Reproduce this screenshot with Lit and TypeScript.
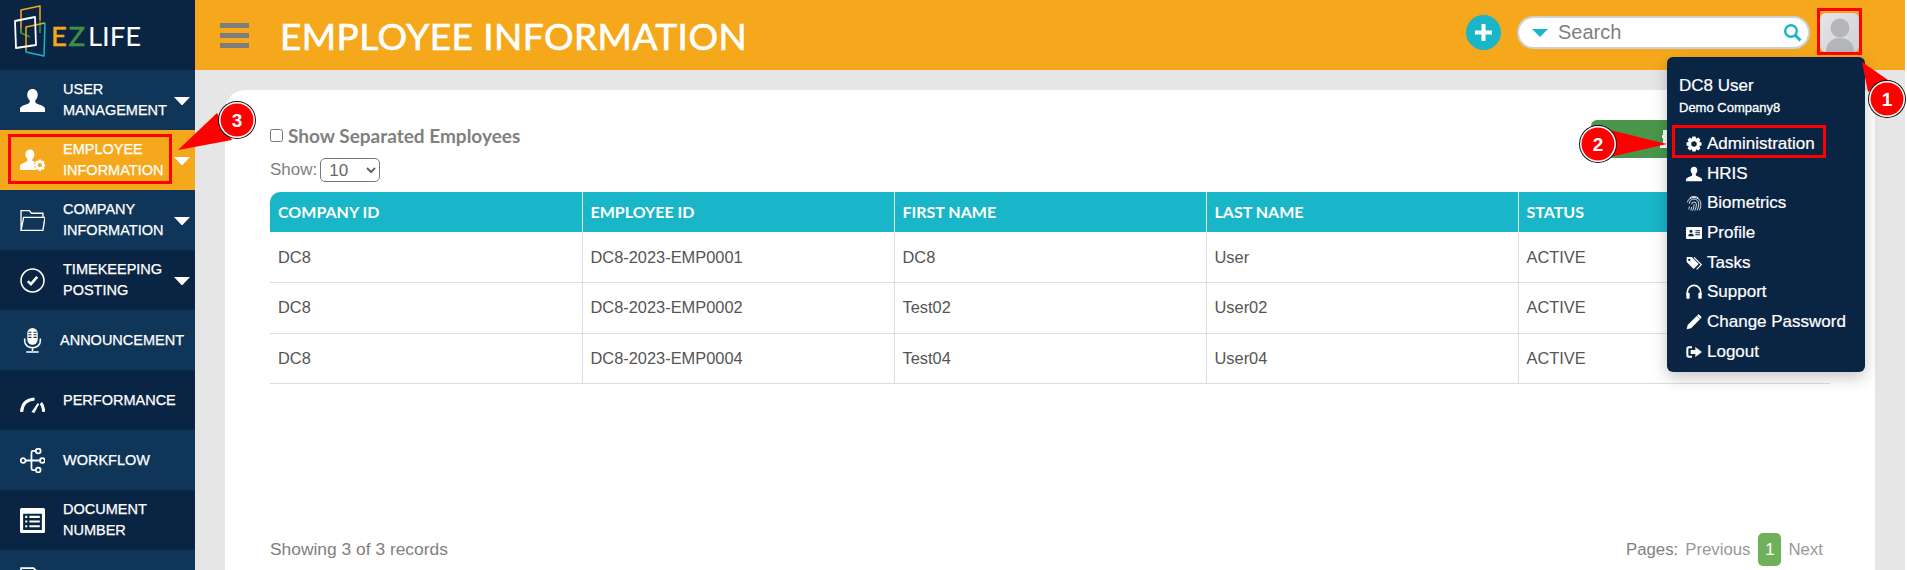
import { LitElement, html, css, svg } from "lit";
import { customElement } from "lit/decorators.js";

const gearPath = (cx: number, cy: number, ro: number, ri: number, hole: number, teeth = 8) => {
  const pts: string[] = [];
  const step = (Math.PI * 2) / teeth;
  for (let i = 0; i < teeth; i++) {
    const a = i * step - Math.PI / 2;
    const spread = [[-0.5, ri], [-0.26, ro], [0.26, ro], [0.5, ri]] as const;
    for (const [k, r] of spread) {
      const t = a + k * step;
      pts.push(`${(cx + r * Math.cos(t)).toFixed(2)} ${(cy + r * Math.sin(t)).toFixed(2)}`);
    }
  }
  const ring = `M${cx - hole} ${cy}a${hole} ${hole} 0 1 0 ${hole * 2} 0a${hole} ${hole} 0 1 0 ${-hole * 2} 0z`;
  return `M${pts.join("L")}z${ring}`;
};

const gear = (cx: number, cy: number, ro: number) =>
  svg`<path fill="currentColor" fill-rule="evenodd" d=${gearPath(cx, cy, ro, ro * 0.74, ro * 0.36)}></path>`;

const USER = "M12 1c-3.2 0-5 2.4-5 5.5 0 2.2 1 4.2 2.3 5.3v1.7c0 .8-1 1.4-3 2.2C3.6 16.7 0 18 0 20v3h24v-3c0-2-3.6-3.3-6.3-4.3-2-.8-3-1.4-3-2.2v-1.700C16 10.700 17 8.700 17 6.500 17 3.400 15.200 1 12 1z";

const sideIcons: Record<string, unknown> = {
  user: svg`<path fill="currentColor" d=${USER}></path>`,
  emp: svg`<path fill="currentColor" d="M9.500 1.500c-2.700 0-4.300 2-4.300 4.600 0 1.900.8 3.500 1.900 4.500v1.400c0 .7-.8 1.200-2.500 1.800C2.400 14.600 0 15.600 0 17.500V21h15.500c-1.200-1.200-2-2.800-2-4.500 0-1.100.3-2.100.8-3-.9-.4-1.800-.8-2.400-1.200v-1.700c1.100-1 1.900-2.600 1.900-4.500 0-2.600-1.600-4.600-3.800-4.600z"></path>${gear(19, 16.500, 5.500)}`,
  folder: svg`<path fill="none" stroke="currentColor" stroke-width="1.300" d="M1 21.500V2.500h8l2 2.500h11v4M1 21.500L3.500 9H24l-2 12.500z"></path>`,
  check: svg`<circle cx="12" cy="12" r="11" fill="none" stroke="currentColor" stroke-width="1.500"></circle><path fill="none" stroke="currentColor" stroke-width="2.400" d="M7.500 12.500l3 3 6-7"></path>`,
  mic: svg`<rect x="7" y="0" width="10" height="16" rx="5" fill="currentColor"></rect><path stroke="#0f3558" stroke-width="1" d="M8 4h3M13 4h3M8 6.500h3M13 6.500h3M8 9h3M13 9h3"></path><path fill="none" stroke="currentColor" stroke-width="1.500" d="M4.500 10v2.500c0 4 3.300 6.500 7.500 6.500s7.500-2.500 7.500-6.500V10M12 19v3M6 23h12"></path>`,
  gauge: svg`<path fill="none" stroke="currentColor" stroke-width="3" d="M1.500 23C2 15 7 11 14 10.500M20 14.500c1.800 2 2.500 5 2.800 8.500"></path><path fill="currentColor" d="M11 23l6-8.500 1.300 1-4.500 8.500z"></path>`,
  flow: svg`<g fill="none" stroke="currentColor" stroke-width="1.700"><circle cx="3" cy="12" r="2.300"></circle><circle cx="17.500" cy="2.800" r="2.300"></circle><circle cx="21.500" cy="12" r="2.300"></circle><circle cx="17.500" cy="21.200" r="2.300"></circle><path d="M5.300 12h13.900M15.200 2.800h-2.700c-1 0-1.500.6-1.500 1.500v15.400c0 .9.500 1.500 1.500 1.500h2.700"></path></g>`,
  doc: svg`<path fill="currentColor" fill-rule="evenodd" d="M1.500 0h21A1.500 1.500 0 0 1 24 1.500v21a1.500 1.500 0 0 1-1.500 1.500h-21A1.500 1.500 0 0 1 0 22.500v-21A1.500 1.500 0 0 1 1.500 0zM3 5.500V21h18V5.500zM5 7.500h2v2H5zM9 7.500h10v2H9zM5 12h2v2H5zM9 12h10v2H9zM5 16.500h2v2H5zM9 16.500h10v2H9z"></path>`,
  file: svg`<path fill="none" stroke="currentColor" stroke-width="1.600" d="M1 1h12l4 4v18H1z"></path>`,
};

const menuIcons: Record<string, unknown> = {
  gear: svg`${gear(12, 12, 11.500)}`,
  user: svg`<path fill="currentColor" d=${USER}></path>`,
  finger: svg`<g fill="none" stroke="currentColor" stroke-width="1.300"><path d="M5 5a10 10 0 0 1 14 0M2 11a10.500 10.500 0 0 1 20 0c.5 5 0 8-2 12M5 13a7 7 0 0 1 14 0c0 4-.8 7-2.500 10M8.500 14a3.500 3.500 0 0 1 7 0c0 4-1 7-2.500 9.500M12 14c0 4-.7 7-2.500 9.500M5 17c0 2-.2 3-.8 4.500M8.500 18c0 2-.5 3.500-1.500 5"></path></g>`,
  card: svg`<path fill="currentColor" fill-rule="evenodd" d="M1.500 3h21A1.500 1.500 0 0 1 24 4.500v15a1.500 1.500 0 0 1-1.500 1.500h-21A1.500 1.500 0 0 1 0 19.500v-15A1.500 1.500 0 0 1 1.500 3zM7.500 7a2.300 2.300 0 1 0 0 4.600 2.300 2.300 0 0 0 0-4.600zM3.500 17h8v-1.500c0-1.500-1.500-2.500-4-2.500s-4 1-4 2.500zM14 8v1.500h7V8zM14 11v1.500h7V11zM14 14v1.500h7V14z"></path>`,
  tags: svg`<path fill="currentColor" fill-rule="evenodd" d="M1 3h7.500L19 13.500 11.500 21 1 10.500zM5 5.500a1.800 1.800 0 1 0 0 3.600 1.800 1.800 0 0 0 0-3.600z"></path><path fill="none" stroke="currentColor" stroke-width="1.800" d="M12 3.500L23 14.500l-7 7"></path>`,
  head: svg`<path fill="none" stroke="currentColor" stroke-width="2.500" d="M2 16v-4a10 10 0 0 1 20 0v4"></path><rect x="0.500" y="13" width="5" height="9" rx="1.500" fill="currentColor"></rect><rect x="18.500" y="13" width="5" height="9" rx="1.500" fill="currentColor"></rect>`,
  pencil: svg`<path fill="currentColor" d="M1 23l1.500-6.500L16 3l5 5L7.500 21.500zM17.500 1.500c.8-.8 2-.8 2.800 0l2.200 2.200c.8.800.8 2 0 2.800l-1 1-5-5z"></path>`,
  out: svg`<path fill="none" stroke="currentColor" stroke-width="3" d="M9 5H4.500C3 5 2 6 2 7.500v9C2 18 3 19 4.500 19H9"></path><path fill="currentColor" d="M14 4.500l10 7.500-10 7.500V15H7V9h7z"></path>`,
};

const NAV = [
  { icon: "user", lines: ["USER", "MANAGEMENT"], caret: true, tone: "light" },
  { icon: "emp", lines: ["EMPLOYEE", "INFORMATION"], caret: true, tone: "active" },
  { icon: "folder", lines: ["COMPANY", "INFORMATION"], caret: true, tone: "light" },
  { icon: "check", lines: ["TIMEKEEPING", "POSTING"], caret: true, tone: "dark" },
  { icon: "mic", lines: ["ANNOUNCEMENT"], caret: false, tone: "light wide" },
  { icon: "gauge", lines: ["PERFORMANCE"], caret: false, tone: "dark" },
  { icon: "flow", lines: ["WORKFLOW"], caret: false, tone: "light" },
  { icon: "doc", lines: ["DOCUMENT", "NUMBER"], caret: false, tone: "dark" },
  { icon: "file", lines: [], caret: false, tone: "light last" },
];

const MENU = [
  { icon: "gear", label: "Administration" },
  { icon: "user", label: "HRIS" },
  { icon: "finger", label: "Biometrics" },
  { icon: "card", label: "Profile" },
  { icon: "tags", label: "Tasks" },
  { icon: "head", label: "Support" },
  { icon: "pencil", label: "Change Password" },
  { icon: "out", label: "Logout" },
];

const COLS = ["COMPANY ID", "EMPLOYEE ID", "FIRST NAME", "LAST NAME", "STATUS"];
const ROWS = [
  ["DC8", "DC8-2023-EMP0001", "DC8", "User", "ACTIVE"],
  ["DC8", "DC8-2023-EMP0002", "Test02", "User02", "ACTIVE"],
  ["DC8", "DC8-2023-EMP0004", "Test04", "User04", "ACTIVE"],
];

@customElement("app-root")
export class AppRoot extends LitElement {
  static styles = css`
    :host { display: block; width: 1907px; height: 570px; overflow: hidden; position: relative; background: #fff; font-family: "Liberation Sans", Arial, sans-serif; }
    .shell { display: grid; grid-template-columns: 195px 1710px; height: 570px; overflow: hidden; }
    .side { background: #0a2543; color: #fff; overflow: hidden; }
    .logo { height: 70px; display: flex; align-items: center; padding-left: 14px; gap: 4px; box-sizing: border-box; }
    .logo svg { margin-bottom: 6px; overflow: visible; }
    .logo-text { font-family: Lato, sans-serif; font-size: 27.500px; font-weight: 400; letter-spacing: 0; line-height: 1; margin-top: 1px; }
    .logo-text .e { color: #f5a81c; letter-spacing: 1.500px; -webkit-text-stroke: 0.5px currentColor; }
    .logo-text .z { color: #3f9142; letter-spacing: 3px; -webkit-text-stroke: 0.5px currentColor; }
    .row { height: 60px; display: flex; align-items: center; padding-left: 20px; box-sizing: border-box; position: relative; }
    .row.light { background: #0f3558; }
    .row.dark { background: #0a2543; }
    .row.active { background: #f5a81c; }
    .ico { width: 25px; height: 25px; flex: none; display: block; }
    .label { margin-left: 18px; font-size: 14.500px; line-height: 21px; -webkit-text-stroke: 0.25px currentColor; }
    .row.wide .label { margin-left: 15px; }
    .row.last { align-items: flex-start; padding-top: 17px; }
    .caret { position: absolute; left: 174px; top: 27px; width: 16px; height: 8px; }
    .main { background: #e6e6e6; display: flex; flex-direction: column; height: 570px; }
    .top { height: 70px; background: #f5a81c; display: flex; align-items: center; flex: none; padding-right: 46px; box-sizing: border-box; }
    .burger { width: 29px; margin-left: 25px; display: flex; flex-direction: column; gap: 5px; }
    .burger i { display: block; height: 5px; background: #7d7d7d; }
    .title { font-family: Lato, sans-serif; font-weight: 400; font-size: 37px; color: #fff; margin-left: 31px; letter-spacing: 0.45px; line-height: 1; flex: 1; -webkit-text-stroke: 0.7px #fff; }
    .plus { width: 35px; height: 35px; margin-bottom: 5px; border-radius: 50%; background: #19b5c9; display: flex; align-items: center; justify-content: center; }
    .search { width: 293px; height: 33px; margin-bottom: 5px; box-sizing: border-box; margin-left: 16px; border: 2px solid #d0d0d0; border-radius: 17px; background: #fff; display: flex; align-items: center; padding: 0 6px 0 13px; }
    .search .tri { width: 16px; height: 8px; flex: none; }
    .search .ph { font-size: 20px; color: #7f7f7f; margin-left: 10px; flex: 1; }
    .search .mag { width: 19px; height: 19px; flex: none; }
    .avatar { width: 39px; height: 39px; margin-bottom: 5px; margin-left: 10px; display: block; }
    .card { flex: 1; margin: 20px 30px 0; background: #fff; border-radius: 20px 0 0 0; padding: 30px 45px 0; box-sizing: border-box; overflow: hidden; }
    .tools { display: flex; justify-content: space-between; align-items: flex-start; height: 72px; }
    .chk { display: flex; align-items: center; height: 30px; }
    .chk input { width: 13px; height: 13px; margin: 0; }
    .chk span { font-family: Lato, sans-serif; font-weight: 700; font-size: 19px; color: #808080; margin-left: 5px; }
    .show { display: flex; align-items: center; margin-top: 8px; font-size: 17px; color: #808080; }
    .show select { margin-left: 3px; width: 60px; height: 24px; font-size: 17px; font-family: inherit; color: #666; background: #fff; border: 1px solid #777; border-radius: 5px; padding: 0 0 0 4px; }
    .btn { width: 239px; height: 38px; background: #4a974b; border-radius: 6px; color: #fff; display: flex; align-items: center; padding-left: 69px; box-sizing: border-box; }
    .btn svg { width: 22px; height: 22px; }
    table { width: 1560px; table-layout: fixed; border-collapse: collapse; font-size: 16.400px; color: #555; }
    th { height: 40px; padding: 0 8px 2px; background: #19b5c9; color: #fff; font-family: Lato, sans-serif; font-weight: 700; font-size: 16px; text-align: left; border-right: 1px solid #e4e4e4; box-sizing: border-box; }
    th:first-child { border-top-left-radius: 10px; }
    th:last-child { border-right: none; }
    td { height: 50.500px; padding: 0 8px; border-bottom: 1px solid #ddd; border-right: 1px solid #ddd; box-sizing: border-box; }
    td:last-child { border-right: none; }
    .foot { display: flex; align-items: center; justify-content: space-between; margin-top: 149px; font-size: 17.400px; color: #808080; padding-right: 7px; }
    .pages { display: flex; align-items: center; font-size: 16.800px; }
    .pages .dim { color: #999; margin-left: 7px; }
    .pages .num { width: 23px; height: 33px; border-radius: 5px; background: #6fb05b; color: #fff; display: flex; align-items: center; justify-content: center; margin-left: 8px; }
    .pages .dim.next { margin-left: 7px; }
    .menu { position: absolute; left: 1667px; top: 57px; width: 198px; height: 315px; background: #0a2543; border-radius: 6px; color: #fff; box-shadow: 0 6px 16px rgba(0,0,0,.22); padding: 19px 12px 0; box-sizing: border-box; -webkit-text-stroke: 0.2px currentColor; }
    .who { font-size: 17px; line-height: 20px; }
    .co { font-size: 13px; line-height: 14px; margin-top: 5px; margin-bottom: 14px; -webkit-text-stroke: 0.3px currentColor; }
    .mi { display: flex; align-items: center; height: 29.700px; font-size: 17px; white-space: nowrap; padding-left: 7px; }
    .mi svg { width: 16px; height: 16px; flex: none; }
    .mi span { margin-left: 5px; }
    .overlay { position: absolute; left: 0; top: 0; width: 1907px; height: 570px; pointer-events: none; }
    .overlay text { font-family: "Liberation Sans", Arial, sans-serif; font-weight: 700; font-size: 19px; fill: #fff; text-anchor: middle; }
  `;

  private callout(cx: number, cy: number, n: string, tri: string) {
    return svg`
      <polygon points=${tri} fill="#f00"></polygon>
      <circle cx=${cx} cy=${cy} r="19" fill="#111"></circle>
      <circle cx=${cx} cy=${cy} r="18" fill="#fff"></circle>
      <circle cx=${cx} cy=${cy} r="16.500" fill="#f00"></circle>
      <text x=${cx} y=${cy + 7}>${n}</text>`;
  }

  render() {
    return html`
      <div class="shell">
        <aside class="side">
          <div class="logo">
            <svg width="33" height="52" viewBox="0 0 33 52" fill="none" stroke-width="1.500" stroke-linejoin="round">
              <path d="M7 27V4L26 0V14" stroke="#f5a81c"></path>
              <path d="M7 22V27L16 31" stroke="#3f9142"></path>
              <path d="M26 14V27" stroke="#3f9142"></path>
              <path d="M12 44V21L31 17" stroke="#f5a81c"></path>
              <path d="M12 44V46L30 50L31 17" stroke="#19b5c9"></path>
              <path d="M1 15L21 11L22 39L2 42Z" stroke="#fff" stroke-width="1.800"></path>
            </svg>
            <div class="logo-text"><span class="e">E</span><span class="z">Z</span>LIFE</div>
          </div>
          ${NAV.map(
            (n) => html`
              <div class="row ${n.tone}">
                <svg class="ico" viewBox="0 0 24 24">${sideIcons[n.icon]}</svg>
                <div class="label">${n.lines.map((l) => html`<div>${l}</div>`)}</div>
                ${n.caret
                  ? html`<svg class="caret" viewBox="0 0 16 8"><path fill="#fff" d="M0 0h16L8.500 8h-1z"></path></svg>`
                  : ""}
              </div>`
          )}
        </aside>
        <div class="main">
          <header class="top">
            <div class="burger"><i></i><i></i><i></i></div>
            <div class="title">EMPLOYEE INFORMATION</div>
            <div class="plus">
              <svg width="17" height="17" viewBox="0 0 17 17"><path fill="#fff" d="M6.500 0h4v6.500H17v4h-6.500V17h-4v-6.500H0v-4h6.500z"></path></svg>
            </div>
            <div class="search">
              <svg class="tri" viewBox="0 0 16 8"><path fill="#19b5c9" d="M0 0h16L8 8z"></path></svg>
              <span class="ph">Search</span>
              <svg class="mag" viewBox="0 0 19 19"><circle cx="8" cy="8" r="5.800" fill="none" stroke="#19b5c9" stroke-width="2.400"></circle><path stroke="#19b5c9" stroke-width="3" d="M12.500 12.500l5 5"></path></svg>
            </div>
            <svg class="avatar" viewBox="0 0 39 39">
              <defs><linearGradient id="av" x1="0" y1="0" x2="1" y2="1"><stop offset="0" stop-color="#e6e6e8"></stop><stop offset="1" stop-color="#cfd0d3"></stop></linearGradient></defs>
              <rect width="39" height="39" rx="6" fill="url(#av)"></rect>
              <circle cx="20" cy="15" r="9.500" fill="#b4b5ba"></circle>
              <path fill="#b4b5ba" d="M6 39c0-9 6-14 14-14s14 5 14 14z"></path>
            </svg>
          </header>
          <section class="card">
            <div class="tools">
              <div>
                <label class="chk"><input type="checkbox" /><span>Show Separated Employees</span></label>
                <div class="show">Show:
                  <select><option>10</option></select>
                </div>
              </div>
              <div class="btn">
                <svg viewBox="0 0 22 22"><path fill="#fff" d="M3 2h6v18H0v-3h3zM2 7h5v3H2z"></path></svg>
              </div>
            </div>
            <table>
              <thead><tr>${COLS.map((c) => html`<th>${c}</th>`)}</tr></thead>
              <tbody>
                ${ROWS.map((r) => html`<tr>${r.map((c) => html`<td>${c}</td>`)}</tr>`)}
              </tbody>
            </table>
            <div class="foot">
              <span>Showing 3 of 3 records</span>
              <div class="pages">
                <span>Pages:</span><span class="dim">Previous</span><span class="num">1</span><span class="dim next">Next</span>
              </div>
            </div>
          </section>
        </div>
      </div>
      <div class="menu">
        <div class="who">DC8 User</div>
        <div class="co">Demo Company8</div>
        ${MENU.map(
          (m) => html`<div class="mi"><svg viewBox="0 0 24 24">${menuIcons[m.icon]}</svg><span>${m.label}</span></div>`
        )}
      </div>
      <svg class="overlay" viewBox="0 0 1907 570">
        <g fill="none" stroke="#f00" stroke-width="3">
          <rect x="9.500" y="135.500" width="161" height="47"></rect>
          <rect x="1673.500" y="126.500" width="151" height="30"></rect>
          <rect x="1818.500" y="9.500" width="42" height="44"></rect>
        </g>
        ${this.callout(237, 120, "3", "178,150 217,113 232,140")}
        ${this.callout(1598, 144, "2", "1667,144 1610,130 1610,157")}
        ${this.callout(1887, 99, "1", "1862,62 1888,80 1868,92")}
      </svg>
    `;
  }
}
